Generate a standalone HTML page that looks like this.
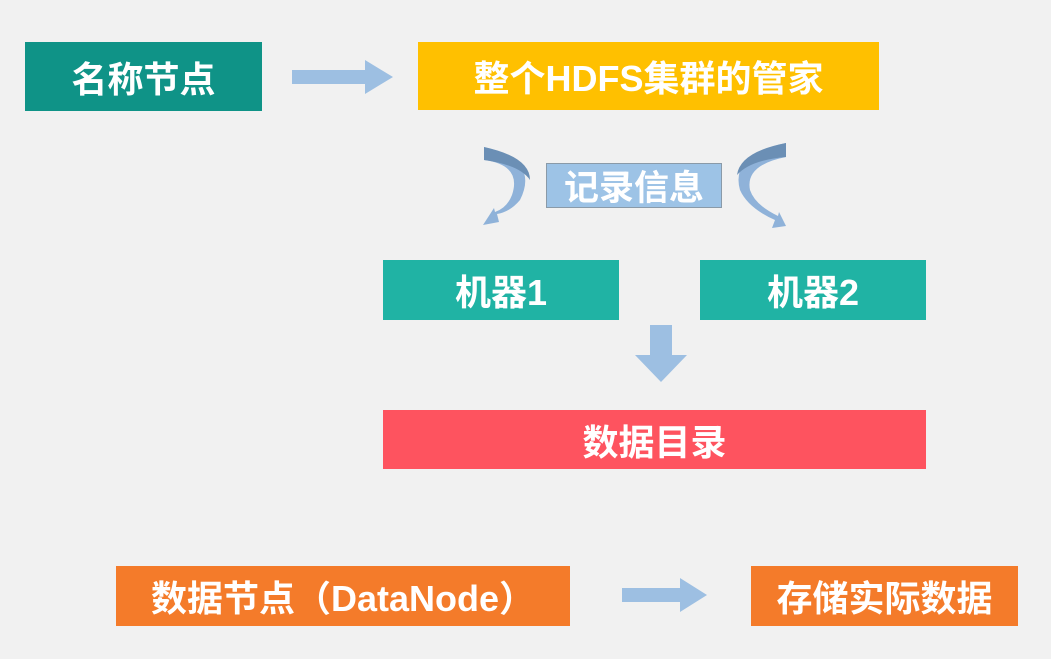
<!DOCTYPE html>
<html><head><meta charset="utf-8"><style>
body{margin:0;width:1051px;height:659px;background:#f1f1f1;position:relative;overflow:hidden;font-family:"Liberation Sans","Noto Sans CJK SC",sans-serif;}
.b{position:absolute;color:#fff;font-weight:bold;display:flex;align-items:center;justify-content:center;font-size:36px;white-space:nowrap;}
svg{position:absolute;left:0;top:0}
</style></head><body>
<div class="b" style="left:25px;top:42px;width:237px;height:69px;background:#0f9387;">名称节点</div>
<div class="b" style="left:418px;top:42px;width:461px;height:68px;background:#ffc000;">整个HDFS集群的管家</div>
<div class="b" style="left:546px;top:163px;width:174px;height:43px;background:#9dc3e6;border:1px solid #8a9aa8;font-size:35px;">记录信息</div>
<div class="b" style="left:383px;top:260px;width:236px;height:60px;background:#20b3a4;">机器1</div>
<div class="b" style="left:700px;top:260px;width:226px;height:60px;background:#20b3a4;">机器2</div>
<div class="b" style="left:383px;top:410px;width:543px;height:59px;background:#fe535f;">数据目录</div>
<div class="b" style="left:116px;top:566px;width:454px;height:60px;background:#f47b2a;">数据节点（DataNode）</div>
<div class="b" style="left:751px;top:566px;width:267px;height:60px;background:#f47b2a;">存储实际数据</div>
<svg width="1051" height="659">
<polygon points="292,70 365,70 365,60 393,77 365,94 365,84 292,84" fill="#9dbfe2"/>
<polygon points="622,588 680,588 680,578 707,595 680,612 680,602 622,602" fill="#9dbfe2"/>
<polygon points="650,325 672,325 672,355 687,355 661,382 635,355 650,355" fill="#9dbfe2"/>
<path d="M484,147 Q540,160 520,200 Q510,212 497,214 L499,222 L483,225 L494,208 L495,212 Q507,208 512,195 Q522,165 484,160 Z" fill="#8fb2d9"/>
<path d="M484,147 Q530,157 530,180 Q520,165 484,160 Z" fill="#6b8fb5"/>
<path d="M786,143 Q730,155 740,190 Q748,208 775,220 L772,228 L786,226 L779,212 L778,216 Q755,205 750,190 Q745,165 786,157 Z" fill="#8fb2d9"/>
<path d="M786,143 Q740,152 737,175 Q750,160 786,157 Z" fill="#6b8fb5"/>
</svg>
</body></html>
